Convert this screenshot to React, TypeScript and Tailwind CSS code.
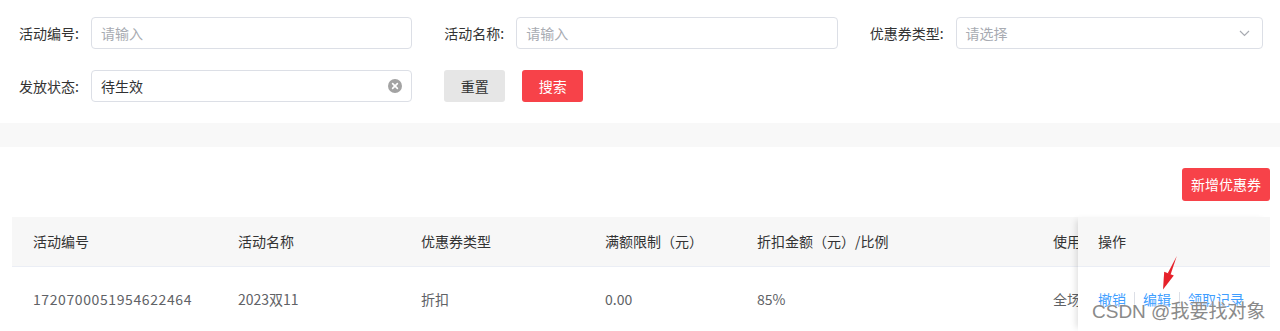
import React from "react";

const FONT = "font-['Noto_Sans_CJK_SC','Noto_Sans',sans-serif]";

function Label({ children }: { children: React.ReactNode }) {
  return <span className="mr-[12px] whitespace-nowrap text-[#333] text-[14px]">{children}</span>;
}

function TextInput({ placeholder, value, clear }: { placeholder?: string; value?: string; clear?: boolean }) {
  return (
    <div className="flex-1 h-[32px] border border-[#dcdfe6] rounded-[4px] bg-white flex items-center pl-[9px] pr-[9px]">
      <span className={value ? "text-[#303133] text-[14px] flex-1" : "text-[#a8abb2] text-[14px] flex-1"}>
        {value ?? placeholder}
      </span>
      {clear && (
        <svg width="14" height="14" viewBox="0 0 14 14">
          <circle cx="7" cy="7" r="7" fill="#a3a3a3" />
          <path d="M4.6 4.6 L9.4 9.4 M9.4 4.6 L4.6 9.4" stroke="#fff" strokeWidth="1.6" strokeLinecap="round" />
        </svg>
      )}
    </div>
  );
}

function SelectInput({ placeholder }: { placeholder: string }) {
  return (
    <div className="flex-1 h-[32px] border border-[#dcdfe6] rounded-[4px] bg-white flex items-center pl-[9px] pr-[12px]">
      <span className="text-[#a8abb2] text-[14px] flex-1">{placeholder}</span>
      <svg width="11" height="7" viewBox="0 0 11 7">
        <path d="M1 1 L5.5 5.5 L10 1" fill="none" stroke="#a8abb2" strokeWidth="1.2" />
      </svg>
    </div>
  );
}

const cols = [
  { w: 205, h: "活动编号", v: "1720700051954622464", num: true },
  { w: 183, h: "活动名称", v: "2023双11", num: false },
  { w: 184, h: "优惠券类型", v: "折扣", num: false },
  { w: 152, h: "满额限制（元）", v: "0.00", num: false },
  { w: 296, h: "折扣金额（元）/比例", v: "85%", num: false },
  { w: 46, h: "使用范围", v: "全场通用", num: false },
];

export default function App() {
  return (
    <div className={`relative w-[1280px] h-[331px] overflow-hidden bg-white ${FONT} text-[14px]`}>
      {/* Search form */}
      <div className="pt-[17px] pb-[21px] pl-[19px] pr-[17px]">
        <div className="grid grid-cols-3 gap-x-[32px] gap-y-[21px]">
          <div className="flex items-center">
            <Label>活动编号:</Label>
            <TextInput placeholder="请输入" />
          </div>
          <div className="flex items-center">
            <Label>活动名称:</Label>
            <TextInput placeholder="请输入" />
          </div>
          <div className="flex items-center">
            <Label>优惠券类型:</Label>
            <SelectInput placeholder="请选择" />
          </div>
          <div className="flex items-center">
            <Label>发放状态:</Label>
            <TextInput value="待生效" clear />
          </div>
          <div className="flex items-center gap-[17px]">
            <button className="w-[61px] h-[32px] rounded-[3px] bg-[#e6e6e6] text-[#333] text-[14px]">重置</button>
            <button className="w-[61px] h-[32px] rounded-[3px] bg-[#f74249] text-white text-[14px]">搜索</button>
          </div>
        </div>
      </div>

      <div className="h-[24px] bg-[#f8f8f8]" />

      <div className="pl-[12px] pr-[10px] pt-[21px]">
        <div className="flex justify-end">
          <button className="h-[33px] px-[9px] rounded-[3px] bg-[#f74249] text-white text-[14px]">新增优惠券</button>
        </div>

        <div className="mt-[16px] flex">
          <div className="flex-1 overflow-hidden">
            <div className="w-max">
              <div className="flex h-[50px] items-center bg-[#f7f7f7] border-b border-[#ebeef5]">
                {cols.map((c) => (
                  <div key={c.h} style={{ width: c.w }} className="pl-[21px] text-[#333] whitespace-nowrap overflow-hidden">
                    {c.h}
                  </div>
                ))}
              </div>
              <div className="flex h-[64px] items-center">
                {cols.map((c) => (
                  <div
                    key={c.h}
                    style={{ width: c.w }}
                    className={
                      c.num
                        ? "pl-[21px] text-[#606266] whitespace-nowrap overflow-hidden tracking-[0.6px]"
                        : "pl-[21px] text-[#606266] whitespace-nowrap overflow-hidden"
                    }
                  >
                    {c.v}
                  </div>
                ))}
              </div>
            </div>
          </div>
          <div className="relative z-10 w-[192px] shrink-0 bg-white shadow-[-5px_0_6px_-3px_rgba(0,0,0,0.12)]">
            <div className="h-[50px] flex items-center px-[20px] bg-[#f7f7f7] border-b border-[#ebeef5] text-[#333]">操作</div>
            <div className="h-[64px] flex items-center px-[20px] text-[#409eff]">
              <span>撤销</span>
              <span className="mx-[8px] w-px h-[14px] bg-[#dcdfe6]" />
              <span>编辑</span>
              <span className="mx-[8px] w-px h-[14px] bg-[#dcdfe6]" />
              <span>领取记录</span>
            </div>
          </div>
        </div>
      </div>

      {/* red annotation arrow */}
      <svg className="absolute left-[1155px] top-[252px] z-20" width="30" height="42" viewBox="0 0 30 42">
        <polygon points="21.8,4 15.6,22.6 12.6,21.4" fill="#e6212a" />
        <polygon points="8,37.5 18.8,23.6 9.2,19.8" fill="#e6212a" />
      </svg>

      {/* watermark */}
      <div className="absolute left-[1092px] top-[299px] z-30 text-[19px] leading-[26px] text-[#8a8a8a] font-['Liberation_Sans','Noto_Sans_CJK_SC',sans-serif] whitespace-nowrap [text-shadow:0_0_2px_#fff,0_0_1px_#fff]">
        CSDN @我要找对象
      </div>
    </div>
  );
}
